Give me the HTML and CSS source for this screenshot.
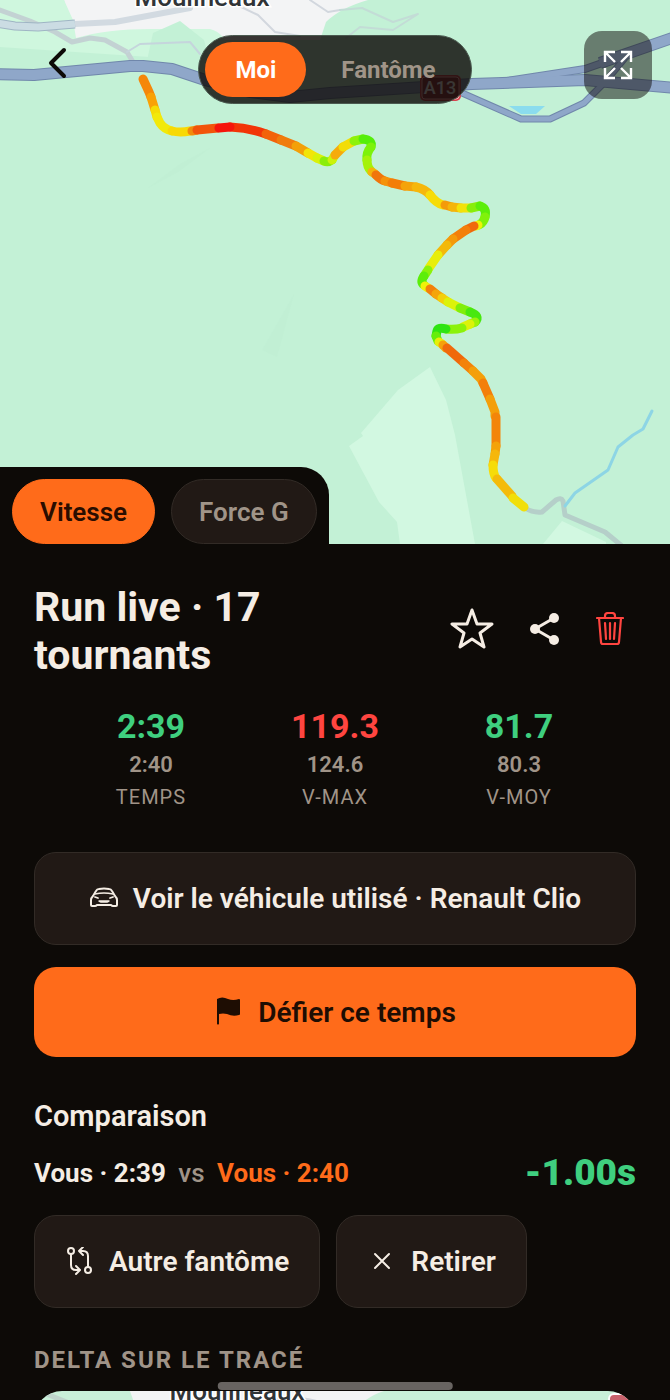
FILE: index.html
```
<!DOCTYPE html>
<html lang="fr">
<head>
    <meta charset="utf-8" />
    <meta name="viewport" content="width=device-width, initial-scale=1" />

    <title>Run live · 17 tournants</title>

    <link rel="stylesheet" href="styles.css">
</head>
<body>
    <section class="map">
        <svg class="map-canvas" viewBox="0 0 670 544" preserveAspectRatio="xMidYMin slice" aria-hidden="true">
            <rect width="670" height="544" fill="#c3f1d6"/>

            <!-- town and fields -->
            <path fill="#f3f4f5" d="M64 0H368Q340 8 326 22L320 40H210L76 45Z"/>
            <path fill="#cff7de" d="M0 0H64L73 20L76 38Q110 28 160 29L210 29Q225 32 236 60L150 57L0 47Z"/>
            <path fill="#c3f1d6" d="M148 56L153 33L180 21L204 40L212 70H148Z"/>
            <path fill="#d2f8e1" d="M430 367L446 400L455 435L475 544H400L397 522L379 502L349 446L363 436L361 433L398 390Z"/>
            <path fill="#d2f8e1" d="M562 521L606 542V544H543Z"/>
            <path fill="#bdeed1" opacity=".4" d="M262 350L294 294L277 357ZM148 188L180 164L210 148L178 172Z"/>

            <!-- small roads -->
            <g fill="none" stroke-linejoin="round" stroke-linecap="round">
                <path stroke="#c3d2d3" stroke-width="5" d="M0 10L30 21L55 32L72 42L90 38L105 40L127 52L133 62"/>
                <path stroke="#c5d5dc" stroke-width="2" d="M127 52L140 44L190 42L200 54"/>
                <path stroke="#d2d7de" stroke-width="2" d="M235 4L258 15L275 32L300 36M310 0L328 12L340 10"/>
                <path stroke="#c3dcd6" stroke-width="2" d="M340 10L362 8L393 22L418 14L393 30L360 27L346 38"/>
                <path stroke="#d2dae1" stroke-width="6" d="M75 24L115 22L190 8"/>
                <path stroke="#9fb5c4" stroke-width="9" stroke-linecap="butt" d="M-4 23L15 26L38 27L75 24"/>
                <path stroke="#cbdce3" stroke-width="7" stroke-linecap="butt" d="M-4 23L15 26L38 27L75 24"/>
                <path stroke="#b5cfc9" stroke-width="5" d="M525 508Q533 513 542 512L556 500Q561 497 563 501L565 515L605 532L622 546"/>
                <path stroke="#8dd5e5" stroke-width="3" d="M652 411L643 429L633 435L618 447L608 470L575 493L565 506"/>
            </g>

            <!-- motorway -->
            <g fill="none" stroke-linejoin="round">
                <g stroke="#7087ab">
                    <path stroke-width="7" d="M462 93L521 119H550L584 103L605 82L625 58"/>
                    <path stroke-width="8" d="M500 82L585 69L605 62"/>
                    <path stroke-width="12" d="M-5 74L34 75L130 66L143 66L172 69L205 80L250 92L290 97L330 93L472 84L585 80L675 88M600 63L675 37"/>
                </g>
                <g stroke="#8fa7c9">
                    <path stroke-width="5" d="M462 93L521 119H550L584 103L605 82L625 58"/>
                    <path stroke-width="6" d="M500 82L585 69L605 62"/>
                    <path stroke-width="10" d="M-5 74L34 75L130 66L143 66L172 69L205 80L250 92L290 97L330 93L472 84L585 80L675 88M600 63L675 37"/>
                </g>
            </g>
            <path fill="#8bdcee" d="M509 106H545L536 114H521Z"/>

            <text class="map-town" x="202" y="6" text-anchor="middle">Moulineaux</text>

            <g>
                <rect x="420" y="75" width="41" height="26" rx="5" fill="#d8434f"/>
                <rect x="422" y="77" width="37" height="22" rx="3" fill="#8f2f3a" stroke="#ffb0b0"/>
                <text class="map-shield" x="440" y="94" text-anchor="middle">A13</text>
            </g>

            <!-- driven track, coloured by speed -->
            <g fill="none" stroke-width="9" stroke-linecap="round" stroke-linejoin="round">
                <path stroke="#f58709" d="M143 79L149 92L151 97"/>
                <path stroke="#f9a106" d="M151 97L155 110"/>
                <path stroke="#f5dc05" d="M155 110L157 117"/>
                <path stroke="#f2e90a" d="M157 117L160 123Q164 129 172 131"/>
                <path stroke="#f8d905" d="M172 131Q180 133 190 131"/>
                <path stroke="#f28b0a" d="M192 131L197 130"/>
                <path stroke="#f2540a" d="M197 130L218 128"/>
                <path stroke="#f23508" d="M230 127Q250 128 266 134"/>
                <path stroke="#f5160c" d="M219 128L230 127"/>
                <path stroke="#f2620a" d="M266 134L281 140"/>
                <path stroke="#f07c0d" d="M281 140L296 146"/>
                <path stroke="#f3a008" d="M296 146L308 153"/>
                <path stroke="#f2e508" d="M308 153L317 158"/>
                <path stroke="#d8f20a" d="M317 158L324 161"/>
                <path stroke="#8aee0a" d="M324 161Q328 163 332 160"/>
                <path stroke="#cdf20a" d="M332 160L335 155"/>
                <path stroke="#f5ab0b" d="M335 155L343 147"/>
                <path stroke="#f2dd08" d="M343 147L354 141"/>
                <path stroke="#8df20a" d="M354 141L363 139"/>
                <path stroke="#55ee0a" d="M363 139Q373 140 371 147"/>
                <path stroke="#7df20a" d="M371 147Q366 153 367 160"/>
                <path stroke="#a5f20a" d="M367 160Q367 167 371 171"/>
                <path stroke="#f4b40a" d="M372 172L375 174"/>
                <path stroke="#f0760b" d="M376 175Q381 180 385 181"/>
                <path stroke="#f5930a" d="M385 181L392 183"/>
                <path stroke="#f37d08" d="M392 183L405 186"/>
                <path stroke="#f5a30a" d="M405 186L416 187"/>
                <path stroke="#f6b70b" d="M416 187Q425 189 430 195"/>
                <path stroke="#f7dc08" d="M430 195Q436 203 443 205"/>
                <path stroke="#f49a0a" d="M445 205L452 207"/>
                <path stroke="#f5b50a" d="M452 207L461 208"/>
                <path stroke="#f3e208" d="M461 208L471 208"/>
                <path stroke="#88ee0a" d="M471 208L480 206"/>
                <path stroke="#5cee0a" d="M480 206Q487 208 485 217"/>
                <path stroke="#80f20a" d="M485 217Q484 222 479 225"/>
                <path stroke="#eff20a" d="M478 225L476 226"/>
                <path stroke="#f0690b" d="M474 226L466 230"/>
                <path stroke="#f37f0a" d="M466 230L453 239"/>
                <path stroke="#f49a0a" d="M453 239L447 245"/>
                <path stroke="#f3b90a" d="M447 245L438 255"/>
                <path stroke="#e8ee0a" d="M438 255L429 268"/>
                <path stroke="#8bf20a" d="M428 270L424 276"/>
                <path stroke="#5cee0a" d="M424 276Q420 282 424 285"/>
                <path stroke="#eff20a" d="M425 286L428 288"/>
                <path stroke="#f2800b" d="M430 289L436 294"/>
                <path stroke="#f4a40a" d="M436 294L442 298"/>
                <path stroke="#f3cf0a" d="M442 298L448 302"/>
                <path stroke="#dcf20a" d="M448 302L460 308"/>
                <path stroke="#80ee0a" d="M460 308L470 312"/>
                <path stroke="#48e80f" d="M470 312Q481 316 475 322"/>
                <path stroke="#9df20a" d="M475 322L470 324"/>
                <path stroke="#dcf20a" d="M470 324L463 327"/>
                <path stroke="#8bf20a" d="M462 328Q455 330 446 329"/>
                <path stroke="#2fe412" d="M446 329Q438 327 437 331L436 336"/>
                <path stroke="#66ee0a" d="M436 336L438 341"/>
                <path stroke="#e8ee0a" d="M439 342L442 344"/>
                <path stroke="#f5a00a" d="M443 345L446 348"/>
                <path stroke="#f0690b" d="M447 348L464 363"/>
                <path stroke="#f3820a" d="M464 363L473 371"/>
                <path stroke="#f49f0a" d="M473 371L481 379L483 383"/>
                <path stroke="#f37f0a" d="M483 383L490 399"/>
                <path stroke="#f49f0a" d="M490 399L495 412V416"/>
                <path stroke="#f3850a" d="M496 417V446"/>
                <path stroke="#f4a20a" d="M496 446L495 454"/>
                <path stroke="#f6b70b" d="M495 454L493 465"/>
                <path stroke="#f6dc08" d="M493 465Q493 474 496 478"/>
                <path stroke="#f4bb0a" d="M497 479L512 496"/>
                <path stroke="#f1df0a" d="M513 498L524 507"/>
            </g>
        </svg>

        <div class="map-bar">
            <button class="back" type="button" aria-label="Retour">
                <svg width="20" height="32" viewBox="0 0 20 32" fill="none" stroke="currentColor" stroke-width="4" stroke-linecap="round" stroke-linejoin="round"><path d="M17 3L4 16L17 29"/></svg>
            </button>
            <div class="driver">
                <button class="driver-choice active" type="button" aria-pressed="true">Moi</button>
                <button class="driver-choice" type="button" aria-pressed="false">Fantôme</button>
            </div>
            <button class="expand" type="button" aria-label="Plein écran">
                <svg width="30" height="30" viewBox="0 0 30 30" fill="none" stroke="currentColor" stroke-width="2.4"><path d="M2 12V2H12M2 2L12 12M18 2H28V12M28 2L18 12M2 18V28H12M2 28L12 18M28 18V28H18M28 28L18 18"/></svg>
            </button>
        </div>

        <div class="layers">
            <button class="layer active" type="button" aria-pressed="true">Vitesse</button>
            <button class="layer" type="button" aria-pressed="false">Force G</button>
        </div>
    </section>

    <main>
        <header>
            <h1>Run live · 17 tournants</h1>
            <div class="actions">
                <button type="button" aria-label="Favori">
                    <svg width="44" height="42" viewBox="0 0 44 42" fill="none" stroke="currentColor" stroke-width="3" stroke-linejoin="round"><path d="M22 2L27 16H42L30 25L34 39L22 31L10 39L14 25L2 16H17Z"/></svg>
                </button>
                <button type="button" aria-label="Partager">
                    <svg width="30" height="32" viewBox="0 0 30 32" fill="currentColor"><path d="M24 5L5 16L24 27" fill="none" stroke="currentColor" stroke-width="3"/><circle cx="24" cy="5" r="5"/><circle cx="5" cy="16" r="5"/><circle cx="24" cy="27" r="5"/></svg>
                </button>
                <button class="delete" type="button" aria-label="Supprimer">
                    <svg width="28" height="34" viewBox="0 0 28 34" fill="none" stroke="currentColor" stroke-width="2.2" stroke-linecap="round" stroke-linejoin="round"><path d="M1 6H27M3 6L5 30Q5 32 7 32H21Q23 32 23 30L25 6M9 6V4Q9 1 12 1H16Q19 1 19 4V6M9 11L10 27M14 11V27M19 11L18 27"/></svg>
                </button>
            </div>
        </header>

        <dl class="stats">
            <div class="stat">
                <dt>TEMPS</dt>
                <dd class="ghost">2:40</dd>
                <dd class="mine good">2:39</dd>
            </div>
            <div class="stat">
                <dt>V-MAX</dt>
                <dd class="ghost">124.6</dd>
                <dd class="mine bad">119.3</dd>
            </div>
            <div class="stat">
                <dt>V-MOY</dt>
                <dd class="ghost">80.3</dd>
                <dd class="mine good">81.7</dd>
            </div>
        </dl>

        <button class="button" type="button">
            <svg width="30" height="30" viewBox="0 0 30 30" fill="none" stroke="currentColor" stroke-width="2" stroke-linecap="round" stroke-linejoin="round"><path d="M4 12L7 7Q8 5 10 5Q15 4 20 5Q22 5 23 7L26 12Q28 14 28 16V21Q28 22 27 22H24Q23 22 22 21H8Q7 22 6 22H3Q2 22 2 21V16Q2 14 4 12Z"/><path d="M6 10Q15 8 24 10" stroke-width="1.6"/><path d="M6 13L9 14M24 13L21 14" stroke-width="1.8"/><path d="M10 17H20L18 18H12Z" stroke-width="1.4"/></svg>
            Voir le véhicule utilisé · Renault Clio
        </button>
        <button class="button primary" type="button">
            <svg width="30" height="30" viewBox="0 0 30 30" fill="currentColor"><path d="M3 2Q8 -1 14 2Q19 4 25 2Q26 2 26 3V17Q26 18 25 18Q19 20 13 17Q9 16 5 17V27Q4 28 3 27Z"/></svg>
            Défier ce temps
        </button>

        <section class="comparison">
            <h2>Comparaison</h2>
            <div class="duel">
                <p><span>Vous · 2:39</span> <span class="versus">vs</span> <span class="rival">Vous · 2:40</span></p>
                <strong class="good">-1.00s</strong>
            </div>
            <div class="choices">
                <button class="button" type="button">
                    <svg width="30" height="30" viewBox="0 0 30 30" fill="none" stroke="currentColor" stroke-width="2" stroke-linecap="round" stroke-linejoin="round"><circle cx="6" cy="4" r="3"/><circle cx="23" cy="23" r="3"/><path d="M6 7V18Q6 23 11 23H14M11 19L15 23L11 27M23 20V9Q23 4 18 4H14M18 0L14 4L18 8"/></svg>
                    Autre fantôme
                </button>
                <button class="button" type="button">
                    <svg width="30" height="30" viewBox="0 0 30 30" fill="none" stroke="currentColor" stroke-width="2" stroke-linecap="round"><path d="M8 7L22 21M22 7L8 21"/></svg>
                    Retirer
                </button>
            </div>
        </section>

        <section class="delta">
            <h3>DELTA SUR LE TRACÉ</h3>
            <div class="delta-map">
                <svg viewBox="0 0 602 300" aria-hidden="true">
                    <rect width="602" height="300" fill="#c9f0d9"/>
                    <path fill="#f3f4f5" d="M96 0H350Q325 8 315 30L110 40Z"/>
                    <path fill="none" stroke="#bfd5cc" stroke-width="5" d="M5 0L60 22L90 40"/>
                    <path fill="none" stroke="#d2d7de" stroke-width="2" d="M225 16Q250 0 290 12"/>
                    <rect x="575" y="3" width="40" height="25" rx="5" fill="#c9636d" stroke="#ffffff" stroke-width="2"/>
                    <text class="map-town" x="203" y="9" text-anchor="middle">Moulineaux</text>
                </svg>
            </div>
        </section>
    </main>

    <div class="home-indicator"></div>
</body>
</html>
```

FILE: styles.css
```
* {
    box-sizing: border-box;
}

html, body {
    margin: 0;
    padding: 0;
}

body {
    position: relative;
    height: 100vh;
    overflow: hidden;
    background: #0d0a07;
    color: #f5ede4;
    font-family: Roboto, sans-serif;
    font-size: 26px;
}

h1, h2, h3, p, dl, dd {
    margin: 0;
}

button {
    border: 0;
    padding: 0;
    background: none;
    color: inherit;
    font: inherit;
    cursor: pointer;
}

svg {
    display: block;
    flex: none;
}

/* map */

.map {
    position: relative;
    display: flex;
    flex-direction: column;
    justify-content: space-between;
    align-items: flex-start;
    height: 544px;
    overflow: hidden;
}

.map-canvas {
    position: absolute;
    top: 0;
    left: 0;
    width: 100%;
    height: 100%;
}

.map-town {
    fill: #303437;
    stroke: #ffffff;
    stroke-width: 3px;
    paint-order: stroke;
    font-size: 26px;
    font-weight: 500;
}

.map-shield {
    fill: #ffffff;
    font-size: 18px;
    font-weight: 500;
}

.map-bar {
    position: relative;
    display: grid;
    grid-template-columns: 1fr auto 1fr;
    width: 100%;
    padding: 31px 18px;
}

.back {
    display: flex;
    align-items: center;
    justify-content: center;
    width: 78px;
    height: 64px;
    color: #0d0a07;
}

.driver {
    display: flex;
    gap: 6px;
    margin-top: 4px;
    padding: 6px;
    border: 1px solid #4b5a50;
    border-radius: 35px;
    background: rgba(13, 10, 7, 0.82);
    color: #a09488;
    font-size: 24px;
    font-weight: 700;
}

.driver-choice {
    height: 55px;
    padding: 0 29px;
    border-radius: 28px;
}

.driver-choice.active {
    padding: 0 30px;
    background: #ff6b1a;
    color: #ffffff;
}

.expand {
    display: flex;
    align-items: center;
    justify-content: center;
    justify-self: end;
    width: 68px;
    height: 68px;
    border-radius: 18px;
    background: rgba(13, 10, 7, 0.5);
    color: #ffffff;
}

.layers {
    position: relative;
    display: flex;
    gap: 16px;
    padding: 12px 12px 0;
    border-radius: 0 28px 0 0;
    background: #0d0a07;
}

.layer {
    height: 65px;
    padding: 0 27px;
    border: 1px solid #322b26;
    border-radius: 33px;
    background: #211915;
    color: #a09488;
    font-weight: 600;
}

.layer.active {
    border-color: #ff6b1a;
    background: #ff6b1a;
    color: #2a0d00;
}

/* run */

main {
    padding: 39px 34px 0;
}

header {
    display: flex;
    align-items: center;
    justify-content: space-between;
}

h1 {
    max-width: 300px;
    font-size: 41px;
    line-height: 48px;
}

.actions {
    display: flex;
    align-items: center;
    gap: 36px;
    padding: 0 12px 4px 0;
}

.delete {
    color: #ff4540;
}

.stats {
    display: grid;
    grid-template-columns: repeat(3, 1fr);
    margin: 25px 0 40px;
    padding: 0 25px;
}

.stat {
    display: flex;
    flex-direction: column-reverse;
    align-items: center;
    color: #a09488;
}

.mine {
    font-size: 34px;
    font-weight: 700;
    line-height: 44px;
}

.ghost {
    font-size: 22px;
    font-weight: 600;
    line-height: 34px;
}

.stat dt {
    font-size: 20px;
    letter-spacing: 1px;
    line-height: 30px;
}

.good {
    color: #3fcf7f;
}

.bad {
    color: #ff4540;
}

.button {
    display: flex;
    align-items: center;
    justify-content: center;
    gap: 14px;
    width: 100%;
    height: 93px;
    margin-bottom: 22px;
    padding: 0 30px;
    border: 1px solid #322b26;
    border-radius: 22px;
    background: #211915;
    font-size: 28px;
    font-weight: 600;
}

.button.primary {
    height: 90px;
    border: 0;
    background: #ff6b1a;
    color: #1e0d03;
}

.comparison h2 {
    margin-top: 42px;
    font-size: 29px;
    font-weight: 600;
    line-height: 34px;
}

.duel {
    display: flex;
    align-items: center;
    justify-content: space-between;
    margin: 16px 0 18px;
    font-weight: 700;
}

.duel strong {
    font-size: 37px;
    line-height: 48px;
}

.versus {
    margin: 0 6px;
    color: #a09488;
    font-weight: 500;
}

.rival {
    color: #ff6b1a;
}

.choices {
    display: flex;
    gap: 16px;
}

.choices .button {
    width: auto;
    margin: 0;
}

.delta h3 {
    margin: 37px 0 16px;
    color: #a09488;
    font-size: 24px;
    font-weight: 700;
    letter-spacing: 2px;
    line-height: 30px;
}

.delta-map {
    overflow: hidden;
    border-radius: 28px;
}

.home-indicator {
    position: absolute;
    bottom: 10px;
    left: 50%;
    width: 35%;
    height: 8px;
    border-radius: 4px;
    background: #686461;
    transform: translateX(-50%);
}
```
